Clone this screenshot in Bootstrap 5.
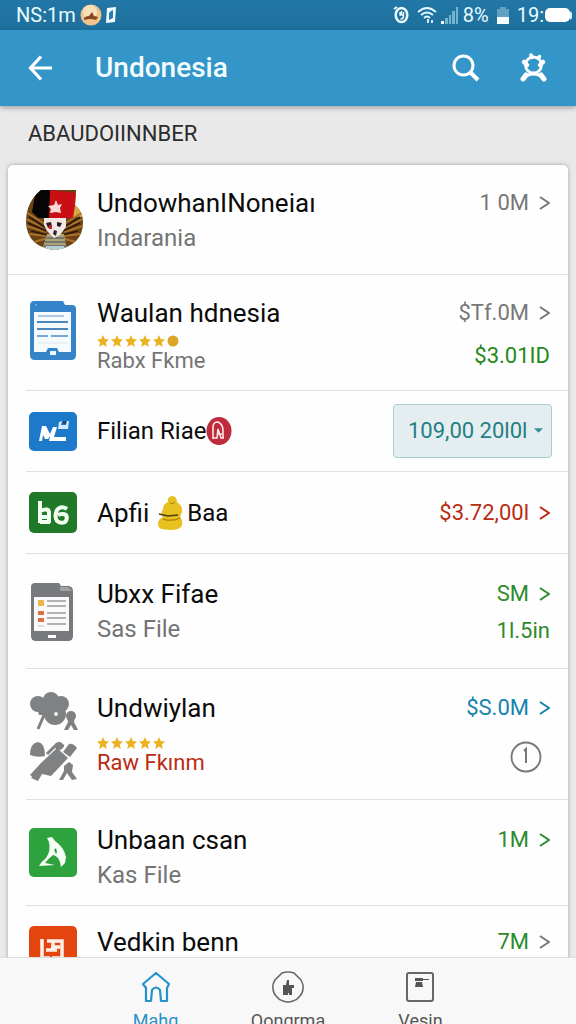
<!DOCTYPE html>
<html lang="id">
<head>
<meta charset="utf-8">
<meta name="viewport" content="width=device-width, initial-scale=1">
<title>Undonesia</title>
<link href="https://cdn.jsdelivr.net/npm/bootstrap@5.3.0/dist/css/bootstrap.min.css" rel="stylesheet">
<style>
body { font-family: Roboto, "Noto Sans", sans-serif; background: #e9e9ea; color: #0b0b0b; }
a { color: inherit; text-decoration: none; }
svg { display: block; flex: none; }
.statusbar { background: linear-gradient(#2277a6, #1e709d); color: #e9fbff; height: 30px; font-size: 20px; line-height: 28px; }
.appbar { background: #3496c8; height: 76px; padding: 0 29px 0 28px; box-shadow: 0 2px 5px rgba(0,0,0,.3); z-index: 1; }
.appbar h1 { font-size: 28px; line-height: 36px; font-weight: 500; color: #f2fdff; padding-left: 41px; }
.appbar .tools { gap: 40px; }
.section-title { font-size: 22px; line-height: 28px; font-weight: 400; color: #2c2c2c; padding: 14px 20px 17px; }
.sheet { background: #fefefe; border-radius: 5px 5px 0 0; box-shadow: 0 0 4px rgba(0,0,0,.3); }
.entry { border-bottom: 1px solid #dfe0e2; margin-left: 18px; }
.entry:first-child { margin-left: 0; padding-left: 18px; }
.entry > a, .entry > div { display: flex; padding: 24px 18px 16px 0; }
.entry.tight > a { padding: 22px 18px 22px 0; }
.entry.stars > a { padding-bottom: 15px; }
.entry.roomy > a { padding-bottom: 23px; }
.entry.cut > a { padding: 20px 18px 12px 0; }
.entry.single > a { padding: 20px 18px 20px 0; align-items: center; }
.entry.single > div { padding: 13px 16px 13px 0; align-items: center; }
.entry.photo > a { padding: 23px 18px 17px 0; }
.entry.photo .rating { margin-top: 13px; }
.thumb { width: 71px; display: flex; align-items: center; align-self: center; flex: none; }
.tile { margin-left: 3px; }
.heading { font-size: 26px; line-height: 32px; }
.heading.compact { font-size: 24px; }
.sub { font-size: 24px; line-height: 28px; margin-top: 5px; color: #747474; }
.rating { margin-top: 6px; }
.rating + .sub { margin-top: 0; font-size: 22px; }
.amount { font-size: 22px; line-height: 32px; gap: 10px; }
.extra { font-size: 22px; line-height: 28px; margin-top: 13px; }
.extra.near { margin-top: 7px; }
.c-grey { color: #777; } .c-green { color: #2c8b2c; } .sub.c-red, .c-red { color: #b92c12; } .c-blue { color: #1583ae; } .c-lime { color: #25891b; }
.picker { width: auto; background-color: #e4eef0; border: 1px solid #a5cdd2; border-radius: 4px; color: #247f84; font-size: 22px; line-height: 28px; padding: 12px 23px 12px 14px;
  background-image: url("data:image/svg+xml,%3csvg xmlns='http://www.w3.org/2000/svg' viewBox='0 0 10 6'%3e%3cpath d='M0 0h10L5 5z' fill='%23339096'/%3e%3c/svg%3e"); background-size: 9px 6px; background-position: right 8px center; }
.tabs { background: #f8f8f9; border-top: 1px solid #dcdddf; height: 67px; padding: 13px 15.5% 0; overflow: hidden; z-index: 1; }
.tabs a { flex: 1 1 0; font-size: 18px; line-height: 22px; color: #555; }
.tabs a.active { color: #2592c9; }
.tabs svg { margin-bottom: 7px; }
</style>
</head>
<body>
<svg width="0" height="0" class="position-absolute" aria-hidden="true">
  <defs>
    <path id="star" d="M6 0l1.800 4 4.200.400-3.200 3L9.800 12 6 9.600 2.200 12l1-4.600L0 4.400 4.200 4z"/>
    <path id="chev" d="M1 1l9 6-9 6" fill="none" stroke="currentColor" stroke-width="2"/>
  </defs>
</svg>
<div class="vh-100 d-flex flex-column overflow-hidden">

  <div class="statusbar d-flex align-items-center flex-shrink-0">
    <span class="ms-3">NS:1m</span>
    <svg class="ms-1" width="22" height="22" viewBox="0 0 22 22"><circle cx="11" cy="11" r="10.500" fill="#efc58d"/><circle cx="10" cy="8" r="7" fill="#f9dfb9"/><path d="M4 14q2-2 5-2l3-4 2 4 4 1-2 3q-6-2-12 0z" fill="#86481f"/></svg>
    <svg class="ms-1" width="10" height="16" viewBox="0 0 10 16"><path d="M1 1l9-1-1 15-9 1z" fill="#effcff"/><path d="M5 4l2-1v8l-4 2V6z" fill="#2b7ba4"/></svg>
    <svg class="ms-auto" width="16" height="18" viewBox="0 0 16 18" fill="none" stroke="#effcff"><ellipse cx="8.500" cy="9" rx="5.800" ry="7" stroke-width="2.500"/><path d="M8.500 5v4M10.500 6v4q0 3-3 3M7 6v3h3" stroke-width="1.400"/><path d="M1 3l3-2" stroke-width="2"/></svg>
    <svg class="ms-2" width="20" height="17" viewBox="0 0 20 17" fill="none" stroke="#e3f8ff" stroke-width="1.800"><path d="M1 5q9-8 18 0M4 8q6-5 12 0M7 11q3-3 6 0M11 12v4M15 13v3"/></svg>
    <svg class="ms-1" width="18" height="17" viewBox="0 0 18 17" fill="#75b4d1"><path d="M0 14h3v3H0z" fill="#effcff"/><path d="M4 11h3v6H4zM8 8h2v9H8zM11 4h3v13h-3zM15 0h2v17h-2z"/></svg>
    <span class="ms-1">8%</span>
    <svg class="ms-2" width="12" height="17" viewBox="0 0 12 17"><path d="M3 0h6v2h3v15H0V2h3z" fill="#639fbe"/><path d="M0 10h12v7H0z" fill="#f4fdff"/></svg>
    <span class="ms-2">19:</span>
    <svg class="me-1" width="28" height="16" viewBox="0 0 28 16"><rect x="1" y="1" width="25" height="14" rx="5" fill="#fff"/><path d="M26 4l2 2v5l-2 2" fill="#d5f2ff"/></svg>
  </div>

  <header class="appbar d-flex align-items-center flex-shrink-0 position-relative">
    <button type="button" class="btn p-0 border-0 text-white" aria-label="Kembali"><svg width="26" height="26" viewBox="0 0 26 26" fill="none" stroke="currentColor" stroke-width="3.200"><path d="M13 1.500L2.500 13 13 24.500M3 13h21"/></svg></button>
    <h1 class="mb-0 me-auto">Undonesia</h1>
    <div class="tools d-flex">
      <button type="button" class="btn p-0 border-0 text-white" aria-label="Cari"><svg width="28" height="28" viewBox="0 0 28 28" fill="none" stroke="currentColor"><circle cx="11.500" cy="11.500" r="9.500" stroke-width="3"/><path d="M18 18l8 8" stroke-width="4"/></svg></button>
      <button type="button" class="btn p-0 border-0 text-white" aria-label="Profil"><svg width="27" height="30" viewBox="0 0 27 30" fill="none" stroke="currentColor" stroke-linecap="round" stroke-linejoin="round"><circle cx="13.500" cy="12" r="8" stroke-width="2.800"/><path d="M11 2l1 2.500M19.500 3.500l-1 2" stroke-width="3.500"/><path d="M4 9l3 3M23 9l-3 3" stroke-width="4.500"/><path d="M4 26Q7 21 13.500 21T23 26" stroke-width="3"/><path d="M3 26l3-4M24 26l-3-4" stroke-width="5"/></svg></button>
    </div>
  </header>

  <main class="flex-fill overflow-hidden px-2">
    <h2 class="section-title mb-0">ABAUDOIINNBER</h2>
    <ul class="sheet list-unstyled mb-0">

      <li class="entry tight"><a href="#">
        <span class="thumb"><svg width="57" height="60" viewBox="0 0 57 60"><defs><clipPath id="round"><path d="M15 0h35l-1 15q8 7 8 17 0 24-28 28Q1 57 0 32 0 12 15 0z"/></clipPath></defs>
          <g clip-path="url(#round)"><path d="M0 0h57v60H0z" fill="#6a4216"/><path d="M45 10h12v17H45z" fill="#d8a848"/>
          <path d="M0 22l19 12M0 29l19 9M0 36l20 6M2 44l19 2M8 52l14-4M57 22L38 34M57 29l-19 9M57 36l-19 6M55 44l-18 2M50 52l-15-4" stroke="#a87228" stroke-width="2"/>
          <path d="M3 27l17 11M2 33l18 8M5 41l16 4M54 27L37 38M54 33l-17 8M52 41l-16 4" stroke="#2c1708" stroke-width="1.500"/>
          <path d="M21 44h17l3 16H16z" fill="#b0a174"/><path d="M20 48h18M19 52h21M18 56h23" stroke="#5c6a70" stroke-width="1.500"/><path d="M20 56h18v4H20z" fill="#b7ced9"/>
          <path d="M18 27h22v10l-6 8-6 3-7-7-3-6z" fill="#f1e7e5"/><path d="M20 33l5-1 1 4-4 2zM31 32l5 1-2 4-3-1z" fill="#271c22"/><path d="M23 35h3v4h-3z" fill="#c52029"/><path d="M28 40l3 1-1 5-3-2z" fill="#332327"/>
          <path d="M6 22L10 0h15v28H12z" fill="#080506"/><path d="M24 0l27 3-4 25H23z" fill="#c90e14"/><path d="M30 10l2 5 4-1-2 4 1 5-5-1-6 1 1-4-3-3 6-1z" fill="#f9d9d3"/></g></svg></span>
        <span class="flex-grow-1"><span class="heading d-block">UndowhanINoneiaı</span><span class="sub d-block">Indarania</span></span>
        <span class="amount d-flex align-items-center align-self-start c-grey">1 0M<svg width="11" height="14"><use href="#chev"/></svg></span>
      </a></li>

      <li class="entry tight stars"><a href="#">
        <span class="thumb align-self-start pt-1"><svg class="ms-1" width="46" height="59" viewBox="0 0 46 59"><path d="M4 0h29l2 4h7q4 0 4 4v46q0 5-5 5H5q-5 0-5-5V5q0-5 4-5z" fill="#3583c8"/><path d="M4 11h37v40H29l-2-4h-9l-2 4H4z" fill="#f5faff"/><path d="M8 15h26" stroke="#97b9d8" stroke-width="1.500"/><path d="M7 21h31M7 28h31" stroke="#4b87bd" stroke-width="2"/><path d="M7 35h11m3 0h17" stroke="#75a8d5" stroke-width="2"/><path d="M8 42h29" stroke="#dce8f1"/><path d="M20 50h6v4h-6z" fill="#e9f7ff"/><path d="M5 5l2-2" stroke="#98c9ed"/></svg></span>
        <span class="flex-grow-1"><span class="heading d-block">Waulan hdnesia</span>
          <span class="rating d-flex" role="img" aria-label="5 bintang"><svg width="82" height="12" fill="#ecb321"><use href="#star"/><use href="#star" x="14"/><use href="#star" x="28"/><use href="#star" x="42"/><use href="#star" x="56"/><circle cx="76" cy="6" r="5.500" fill="#dda524"/></svg></span>
          <span class="sub d-block">Rabx Fkme</span></span>
        <span class="d-flex flex-column align-items-end"><span class="amount d-flex align-items-center c-grey">$Tf.0M<svg width="11" height="14"><use href="#chev"/></svg></span><span class="extra c-lime">$3.01ID</span></span>
      </a></li>

      <li class="entry single"><div>
        <span class="thumb"><svg class="tile" width="48" height="39" viewBox="0 0 48 39"><rect width="48" height="39" rx="5" fill="#1d7acb"/><path d="M10 29l3-15h4l4 8 3-7h4l-3 10h12v4H20l1-5-2 3h-3l-2-4-1 6z" fill="#fff"/><path d="M30 10l3-1-1 4h5l1-4h2l-1 8H29z" fill="#d4e9ff"/><path d="M34 9h3v3h-3z" fill="#26476d"/></svg></span>
        <label class="heading compact flex-grow-1 d-flex align-items-center" for="period">Filian Riae<svg width="26" height="28" viewBox="0 0 26 28"><ellipse cx="13" cy="14" rx="12.500" ry="14" fill="#bd2b3c"/><path d="M7 22V10q0-5 5-5 5 2 5 9v7M7 21h4l1-9 3 9h3M12 17h4" fill="none" stroke="#ffe5e6" stroke-width="1.600"/></svg></label>
        <select class="form-select picker" id="period"><option>109,00 20l0l</option></select>
      </div></li>

      <li class="entry single"><a href="#">
        <span class="thumb"><svg class="tile" width="48" height="41" viewBox="0 0 48 41"><rect width="48" height="41" rx="5" fill="#207928"/><path d="M11 9v22M11 19q9-4 9 2v10M11 25h9M11 30h10M38 17q-6-4-10 1-3 6 0 11 4 3 8 1 3-3 1-7-3-2-8 0" fill="none" stroke="#f2fff0" stroke-width="4"/></svg></span>
        <span class="heading flex-grow-1 d-flex align-items-center">Apfii<svg class="ms-2 me-1" width="26" height="34" viewBox="0 0 26 34"><path d="M11 6q-1-5 4-6 5 0 5 6 6 4 5 10l-2 5q3 3 2 8-1 5-12 5Q0 34 1 28q0-5 5-7-3-3 0-8 0-5 5-7z" fill="#e8c121"/><path d="M2 18l9 2 10-1" fill="none" stroke="#4e3c0c" stroke-width="1.600"/><path d="M6 23q8 3 17-1" fill="none" stroke="#b18b12" stroke-width="1.500"/><path d="M13 7q2 2 5-1" stroke="#a67e09" fill="none"/></svg><span class="heading compact">Baa</span></span>
        <span class="amount d-flex align-items-center c-red">$3.72,00l<svg width="11" height="14"><use href="#chev"/></svg></span>
      </a></li>

      <li class="entry roomy"><a href="#">
        <span class="thumb"><svg class="ms-1" width="44" height="58" viewBox="0 0 44 58"><path d="M5 0h24l2 3h8q4 1 4 5v45q0 5-5 5H6q-5 0-5-5V4q0-4 4-4z" fill="#77797c"/><path d="M30 4h8l4 4H30z" fill="#a0a2a4"/><path d="M4 14h35v34H4z" fill="#fafafa"/><path d="M8 17h6v6H8z" fill="#edb54e"/><path d="M8 28h6v4H8zM8 35h6v4H8z" fill="#db723d"/><path d="M8 42h6v2H8z" fill="#ddd"/><path d="M17 18h19M17 23h19M17 30h19M17 35h19M17 41h19" stroke="#9a9a9a" stroke-width="1.500"/><path d="M18 52h8v3h-8z" fill="#fff"/></svg></span>
        <span class="flex-grow-1"><span class="heading d-block">Ubxx Fifae</span><span class="sub d-block">Sas File</span></span>
        <span class="d-flex flex-column align-items-end"><span class="amount d-flex align-items-center c-green">SM<svg width="11" height="14"><use href="#chev"/></svg></span><span class="extra near c-green">1l.5in</span></span>
      </a></li>

      <li class="entry photo"><a href="#">
        <span class="thumb"><svg class="ms-1" width="48" height="90" viewBox="0 0 48 90" fill="#7f8183"><circle cx="8" cy="12" r="8"/><circle cx="21" cy="8" r="8"/><circle cx="31" cy="12" r="8"/><circle cx="25" cy="22" r="11"/><path d="M5 8h27v15H9z"/><path d="M14 23L8 37" stroke="#7f8183" stroke-width="3"/><circle cx="41" cy="24" r="5"/><path d="M37 24h8l-1 6 4 8h-4l-3-5-3 5h-4l4-8z"/><circle cx="26" cy="22" r="2" fill="#eee"/>
          <path d="M0 63q0-12 8-13 7 1 7 14-8 2-15-1z"/><path d="M11 71l16-15 11 10-17 18-9-2-5 6-7-5z"/><path d="M17 62l9-9 8 1" fill="none" stroke="#7f8183" stroke-width="3"/><circle cx="29" cy="54" r="4"/><path d="M33 60l6-8q4-1 8 4l-7 9zM34 74l5-4 4 3-1 7 5 7-5 1-5-7-4 7h-4l5-9zM1 86l8-9 3 5-4 7z"/></svg></span>
        <span class="flex-grow-1"><span class="heading d-block">Undwiylan</span>
          <span class="rating d-flex" role="img" aria-label="5 bintang"><svg width="68" height="12" fill="#ecb321"><use href="#star"/><use href="#star" x="14"/><use href="#star" x="28"/><use href="#star" x="42"/><use href="#star" x="56"/></svg></span>
          <span class="sub d-block c-red">Raw Fkınm</span></span>
        <span class="d-flex flex-column align-items-end"><span class="amount d-flex align-items-center c-blue">$S.0M<svg width="11" height="14"><use href="#chev"/></svg></span><svg class="mt-3 me-2" width="32" height="34" viewBox="0 0 32 34" fill="none" stroke="#777"><circle cx="16" cy="17" r="14.500" stroke-width="1.800"/><path d="M14 11l2-2v14" stroke-width="2"/></svg></span>
      </a></li>

      <li class="entry"><a href="#">
        <span class="thumb align-self-start pt-1"><svg class="tile" width="48" height="49" viewBox="0 0 48 49"><rect width="48" height="49" rx="5" fill="#2ea33d"/><path d="M18 10l5-1 3 4q9 6 11 16l-1 6-4 4-1-5q-2-6-7-7-5 4-8 8l10 2-16 1q2-4 7-8 5-7 3-16zm7 12l2 4 1-2-1-4z" fill="#f8fff6" fill-rule="evenodd"/></svg></span>
        <span class="flex-grow-1"><span class="heading d-block">Unbaan csan</span><span class="sub d-block">Kas File</span></span>
        <span class="amount d-flex align-items-center align-self-start c-green">1M<svg width="11" height="14"><use href="#chev"/></svg></span>
      </a></li>

      <li class="entry cut"><a href="#">
        <span class="thumb align-self-start"><svg class="tile" width="48" height="49" viewBox="0 0 48 49"><rect width="48" height="49" rx="5" fill="#e4450f"/><path d="M13 13v19h8M17 24h11M18 15h15v20M22 21h9M23 32h10M24 15v6" fill="none" stroke="#fff0e8" stroke-width="3.500"/></svg></span>
        <span class="heading flex-grow-1">Vedkin benn</span>
        <span class="amount d-flex align-items-center align-self-start c-green">7M<svg class="c-grey" width="11" height="14"><use href="#chev"/></svg></span>
      </a></li>
    </ul>
  </main>

  <nav class="tabs d-flex flex-shrink-0 position-relative" aria-label="Navigasi">
    <a href="#" class="active d-flex flex-column align-items-center" aria-current="page"><svg width="30" height="32" viewBox="0 0 30 32" fill="none" stroke="currentColor" stroke-width="2.200" stroke-linejoin="round"><path d="M2 13L15 2l13 11-2 4v13h-6l-1-11q-4-5-8 0l-1 11H5V17z"/></svg>Mahg</a>
    <a href="#" class="d-flex flex-column align-items-center"><svg width="32" height="32" viewBox="0 0 32 32"><path d="M10 2q6-2 12 0l7 7q3 6 2 8 0 5-3 8-3 4-7 5-5 2-10 0-4-1-7-5-3-3-3-8-1-3 2-8z" fill="none" stroke="#666" stroke-width="1.500"/><path d="M11 14h3l1-5h2v5h5v3h-2v7h-3v-2h-1v2h-5z" fill="#555"/></svg>Oongrma</a>
    <a href="#" class="d-flex flex-column align-items-center"><svg width="30" height="32" viewBox="0 0 30 32"><rect x="2" y="2" width="26" height="28" rx="2" fill="none" stroke="#666" stroke-width="2"/><path d="M10 7h8v1h6v1h-6v1h-8zM11 11h6l1 5h-8z" fill="#555"/></svg>Vesin</a>
  </nav>
</div>
<script src="https://cdn.jsdelivr.net/npm/bootstrap@5.3.0/dist/js/bootstrap.bundle.min.js"></script>
</body>
</html>
